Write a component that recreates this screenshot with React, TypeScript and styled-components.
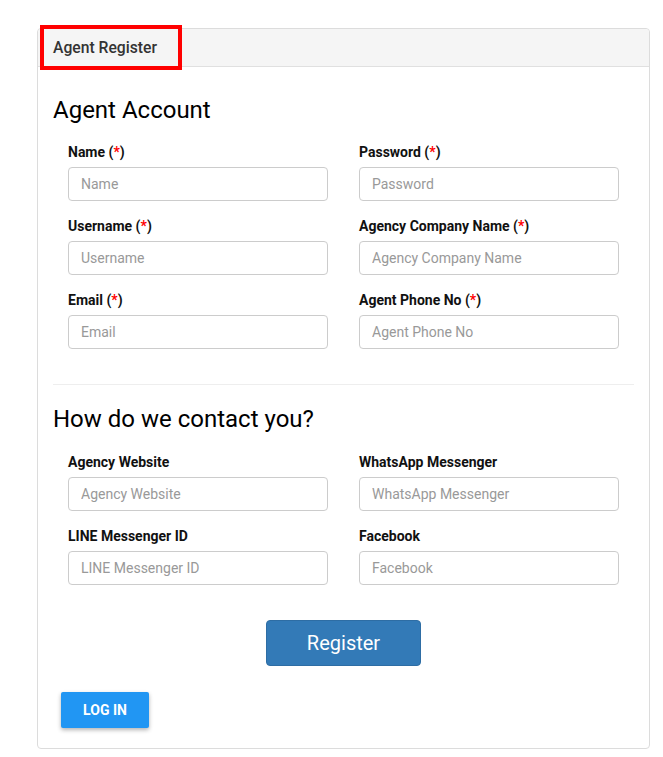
import React from "react";
import styled, { createGlobalStyle } from "styled-components";

const GlobalStyle = createGlobalStyle`
  * { box-sizing: border-box; }
  body {
    margin: 0;
    background: #fff;
    font-family: Roboto, "Liberation Sans", Arial, sans-serif;
    color: #000;
  }
`;

const Page = styled.div`
  padding: 28px 14px 8px 37px;
`;

const Card = styled.div`
  position: relative;
  width: 613px;
  border: 1px solid #dcdcdc;
  border-radius: 4px;
  background: #fff;
`;

const CardHeader = styled.div`
  height: 38px;
  display: flex;
  align-items: center;
  padding-left: 15px;
  background: #f5f5f5;
  border-bottom: 1px solid #e0e0e0;
  border-radius: 4px 4px 0 0;
  font-size: 15.7px;
  font-weight: 500;
  color: #333;
`;

const Highlight = styled.div`
  position: absolute;
  left: 2px;
  top: -4px;
  width: 142px;
  height: 45px;
  border: 4px solid #ff0000;
  pointer-events: none;
`;

const CardBody = styled.div`
  padding: 0 15px 20px;
  display: flex;
  flex-direction: column;
`;

const SectionTitle = styled.h3<{ $top: number }>`
  margin: ${({ $top }) => $top}px 0 19px;
  font-size: 24px;
  line-height: 1.1;
  font-weight: 400;
  color: #000;
`;

const FieldGrid = styled.div`
  display: grid;
  grid-template-columns: 1fr 1fr;
  column-gap: 31px;
  row-gap: 15px;
  padding: 0 15px;
`;

const Field = styled.div`
  display: flex;
  flex-direction: column;
`;

const Label = styled.label`
  font-size: 14px;
  line-height: 20px;
  font-weight: 700;
  color: #111;
  margin-bottom: 5px;
`;

const Required = styled.span`
  color: #ff0000;
`;

const Input = styled.input`
  height: 34px;
  width: 100%;
  padding: 6px 12px;
  border: 1px solid #cccccc;
  border-radius: 4px;
  font-family: inherit;
  font-size: 14px;
  color: #555;
  background: #fff;
  &::placeholder {
    color: #999;
  }
`;

const Divider = styled.hr`
  margin: 35px 0 0;
  border: 0;
  border-top: 1px solid #eeeeee;
`;

const RegisterButton = styled.button`
  align-self: center;
  margin-top: 35px;
  width: 155px;
  height: 46px;
  border: 1px solid #2e6da4;
  border-radius: 4px;
  background: #337ab7;
  color: #fff;
  font-family: inherit;
  font-size: 20px;
  font-weight: 400;
`;

const LoginButton = styled.button`
  align-self: flex-start;
  margin: 26px 0 0 8px;
  width: 88px;
  height: 36px;
  border: 0;
  border-radius: 2px;
  background: #2196f3;
  color: #fff;
  font-family: inherit;
  font-size: 14px;
  font-weight: 700;
  text-transform: uppercase;
  box-shadow: 0 2px 4px rgba(0, 0, 0, 0.3);
`;

type FieldDef = { label: string; required?: boolean };

const account: FieldDef[] = [
  { label: "Name", required: true },
  { label: "Password", required: true },
  { label: "Username", required: true },
  { label: "Agency Company Name", required: true },
  { label: "Email", required: true },
  { label: "Agent Phone No", required: true },
];

const contact: FieldDef[] = [
  { label: "Agency Website" },
  { label: "WhatsApp Messenger" },
  { label: "LINE Messenger ID" },
  { label: "Facebook" },
];

const Fields = ({ items }: { items: FieldDef[] }) => (
  <FieldGrid>
    {items.map((f) => (
      <Field key={f.label}>
        <Label>
          {f.label}
          {f.required && (
            <>
              {" ("}
              <Required>*</Required>
              {")"}
            </>
          )}
        </Label>
        <Input
          type={f.label === "Password" ? "password" : "text"}
          placeholder={f.label}
        />
      </Field>
    ))}
  </FieldGrid>
);

export default function App() {
  return (
    <>
      <GlobalStyle />
      <Page>
        <Card>
          <CardHeader>Agent Register</CardHeader>
          <Highlight />
          <CardBody>
            <SectionTitle $top={30}>Agent Account</SectionTitle>
            <Fields items={account} />
            <Divider />
            <SectionTitle $top={21}>How do we contact you?</SectionTitle>
            <Fields items={contact} />
            <RegisterButton>Register</RegisterButton>
            <LoginButton>Log in</LoginButton>
          </CardBody>
        </Card>
      </Page>
    </>
  );
}
